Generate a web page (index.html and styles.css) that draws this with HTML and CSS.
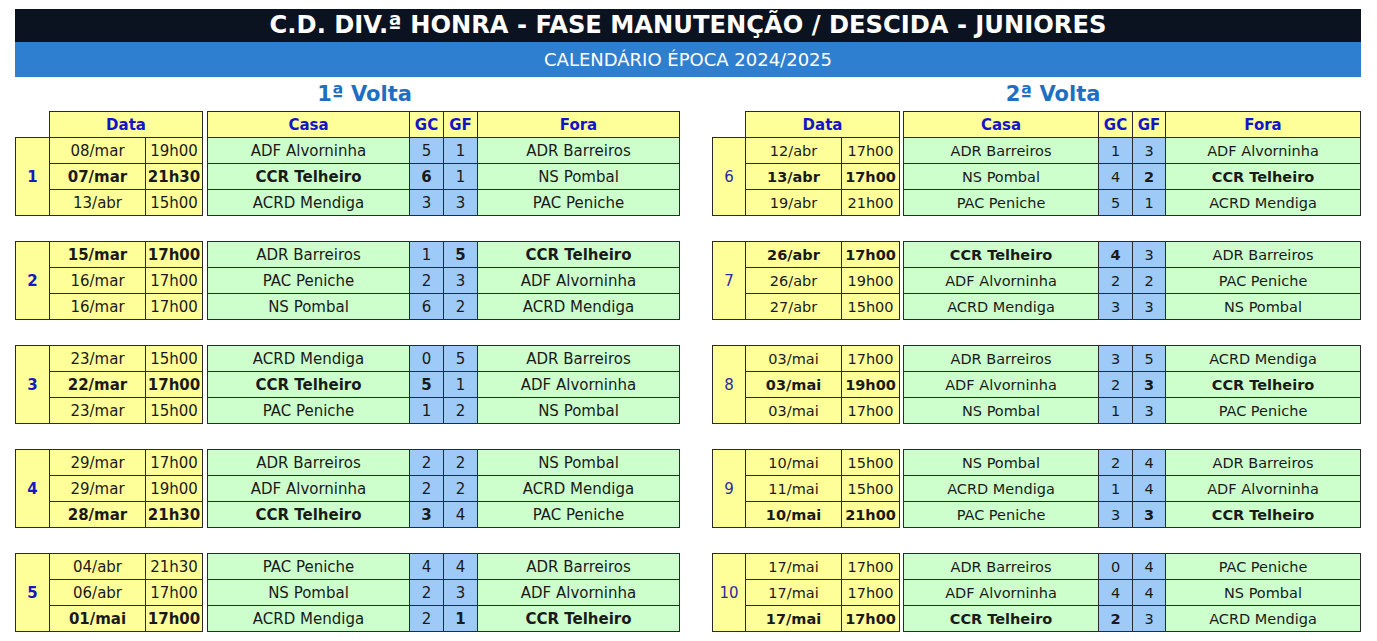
FILE: index.html
```html
<!DOCTYPE html>
<html lang="pt">
<head>
<meta charset="utf-8">
<title>Calendário Juniores</title>
<link rel="stylesheet" href="styles.css">
</head>
<body>
<div class="page">
  <div class="title">C.D. DIV.ª HONRA - FASE MANUTENÇÃO / DESCIDA - JUNIORES</div>
  <div class="subtitle">CALENDÁRIO ÉPOCA 2024/2025</div>

  <div class="sides">
    <!-- 1ª Volta -->
    <section class="side side-left">
      <h2 class="volta">1ª Volta</h2>
      <div class="head">
        <div class="head-date"><div class="hc">Data</div></div>
        <div class="head-game"><div class="hc">Casa</div><div class="hc">GC</div><div class="hc">GF</div><div class="hc">Fora</div></div>
      </div>

      <div class="block">
        <div class="dates"><div class="round">1</div>
          <div class="c">08/mar</div><div class="c">19h00</div>
          <div class="c b">07/mar</div><div class="c b">21h30</div>
          <div class="c">13/abr</div><div class="c">15h00</div>
        </div>
        <div class="games">
          <div class="c">ADF Alvorninha</div><div class="g">5</div><div class="g">1</div><div class="c">ADR Barreiros</div>
          <div class="c b">CCR Telheiro</div><div class="g b">6</div><div class="g">1</div><div class="c">NS Pombal</div>
          <div class="c">ACRD Mendiga</div><div class="g">3</div><div class="g">3</div><div class="c">PAC Peniche</div>
        </div>
      </div>

      <div class="block">
        <div class="dates"><div class="round">2</div>
          <div class="c b">15/mar</div><div class="c b">17h00</div>
          <div class="c">16/mar</div><div class="c">17h00</div>
          <div class="c">16/mar</div><div class="c">17h00</div>
        </div>
        <div class="games">
          <div class="c">ADR Barreiros</div><div class="g">1</div><div class="g b">5</div><div class="c b">CCR Telheiro</div>
          <div class="c">PAC Peniche</div><div class="g">2</div><div class="g">3</div><div class="c">ADF Alvorninha</div>
          <div class="c">NS Pombal</div><div class="g">6</div><div class="g">2</div><div class="c">ACRD Mendiga</div>
        </div>
      </div>

      <div class="block">
        <div class="dates"><div class="round">3</div>
          <div class="c">23/mar</div><div class="c">15h00</div>
          <div class="c b">22/mar</div><div class="c b">17h00</div>
          <div class="c">23/mar</div><div class="c">15h00</div>
        </div>
        <div class="games">
          <div class="c">ACRD Mendiga</div><div class="g">0</div><div class="g">5</div><div class="c">ADR Barreiros</div>
          <div class="c b">CCR Telheiro</div><div class="g b">5</div><div class="g">1</div><div class="c">ADF Alvorninha</div>
          <div class="c">PAC Peniche</div><div class="g">1</div><div class="g">2</div><div class="c">NS Pombal</div>
        </div>
      </div>

      <div class="block">
        <div class="dates"><div class="round">4</div>
          <div class="c">29/mar</div><div class="c">17h00</div>
          <div class="c">29/mar</div><div class="c">19h00</div>
          <div class="c b">28/mar</div><div class="c b">21h30</div>
        </div>
        <div class="games">
          <div class="c">ADR Barreiros</div><div class="g">2</div><div class="g">2</div><div class="c">NS Pombal</div>
          <div class="c">ADF Alvorninha</div><div class="g">2</div><div class="g">2</div><div class="c">ACRD Mendiga</div>
          <div class="c b">CCR Telheiro</div><div class="g b">3</div><div class="g">4</div><div class="c">PAC Peniche</div>
        </div>
      </div>

      <div class="block">
        <div class="dates"><div class="round">5</div>
          <div class="c">04/abr</div><div class="c">21h30</div>
          <div class="c">06/abr</div><div class="c">17h00</div>
          <div class="c b">01/mai</div><div class="c b">17h00</div>
        </div>
        <div class="games">
          <div class="c">PAC Peniche</div><div class="g">4</div><div class="g">4</div><div class="c">ADR Barreiros</div>
          <div class="c">NS Pombal</div><div class="g">2</div><div class="g">3</div><div class="c">ADF Alvorninha</div>
          <div class="c">ACRD Mendiga</div><div class="g">2</div><div class="g b">1</div><div class="c b">CCR Telheiro</div>
        </div>
      </div>
    </section>

    <!-- 2ª Volta -->
    <section class="side side-right">
      <h2 class="volta">2ª Volta</h2>
      <div class="head">
        <div class="head-date"><div class="hc">Data</div></div>
        <div class="head-game"><div class="hc">Casa</div><div class="hc">GC</div><div class="hc">GF</div><div class="hc">Fora</div></div>
      </div>

      <div class="block">
        <div class="dates"><div class="round">6</div>
          <div class="c">12/abr</div><div class="c">17h00</div>
          <div class="c b">13/abr</div><div class="c b">17h00</div>
          <div class="c">19/abr</div><div class="c">21h00</div>
        </div>
        <div class="games">
          <div class="c">ADR Barreiros</div><div class="g">1</div><div class="g">3</div><div class="c">ADF Alvorninha</div>
          <div class="c">NS Pombal</div><div class="g">4</div><div class="g b">2</div><div class="c b">CCR Telheiro</div>
          <div class="c">PAC Peniche</div><div class="g">5</div><div class="g">1</div><div class="c">ACRD Mendiga</div>
        </div>
      </div>

      <div class="block">
        <div class="dates"><div class="round">7</div>
          <div class="c b">26/abr</div><div class="c b">17h00</div>
          <div class="c">26/abr</div><div class="c">19h00</div>
          <div class="c">27/abr</div><div class="c">15h00</div>
        </div>
        <div class="games">
          <div class="c b">CCR Telheiro</div><div class="g b">4</div><div class="g">3</div><div class="c">ADR Barreiros</div>
          <div class="c">ADF Alvorninha</div><div class="g">2</div><div class="g">2</div><div class="c">PAC Peniche</div>
          <div class="c">ACRD Mendiga</div><div class="g">3</div><div class="g">3</div><div class="c">NS Pombal</div>
        </div>
      </div>

      <div class="block">
        <div class="dates"><div class="round">8</div>
          <div class="c">03/mai</div><div class="c">17h00</div>
          <div class="c b">03/mai</div><div class="c b">19h00</div>
          <div class="c">03/mai</div><div class="c">17h00</div>
        </div>
        <div class="games">
          <div class="c">ADR Barreiros</div><div class="g">3</div><div class="g">5</div><div class="c">ACRD Mendiga</div>
          <div class="c">ADF Alvorninha</div><div class="g">2</div><div class="g b">3</div><div class="c b">CCR Telheiro</div>
          <div class="c">NS Pombal</div><div class="g">1</div><div class="g">3</div><div class="c">PAC Peniche</div>
        </div>
      </div>

      <div class="block">
        <div class="dates"><div class="round">9</div>
          <div class="c">10/mai</div><div class="c">15h00</div>
          <div class="c">11/mai</div><div class="c">15h00</div>
          <div class="c b">10/mai</div><div class="c b">21h00</div>
        </div>
        <div class="games">
          <div class="c">NS Pombal</div><div class="g">2</div><div class="g">4</div><div class="c">ADR Barreiros</div>
          <div class="c">ACRD Mendiga</div><div class="g">1</div><div class="g">4</div><div class="c">ADF Alvorninha</div>
          <div class="c">PAC Peniche</div><div class="g">3</div><div class="g b">3</div><div class="c b">CCR Telheiro</div>
        </div>
      </div>

      <div class="block">
        <div class="dates"><div class="round">10</div>
          <div class="c">17/mai</div><div class="c">17h00</div>
          <div class="c">17/mai</div><div class="c">17h00</div>
          <div class="c b">17/mai</div><div class="c b">17h00</div>
        </div>
        <div class="games">
          <div class="c">ADR Barreiros</div><div class="g">0</div><div class="g">4</div><div class="c">PAC Peniche</div>
          <div class="c">ADF Alvorninha</div><div class="g">4</div><div class="g">4</div><div class="c">NS Pombal</div>
          <div class="c b">CCR Telheiro</div><div class="g b">2</div><div class="g">3</div><div class="c">ACRD Mendiga</div>
        </div>
      </div>
    </section>
  </div>
</div>
</body>
</html>
```

FILE: styles.css
```css
* { box-sizing: border-box; }

html, body {
  margin: 0;
  padding: 0;
  background: #ffffff;
}

body {
  font-family: "DejaVu Sans", Verdana, sans-serif;
  color: #1a1a1a;
}

.page {
  padding: 9px 0 0 15px;
  width: 1377px;
}

.title {
  width: 1346px;
  height: 33px;
  background: #0b1220;
  color: #ffffff;
  font-weight: bold;
  font-size: 24.2px;
  line-height: 33px;
  text-align: center;
  white-space: nowrap;
}

.subtitle {
  width: 1346px;
  height: 35px;
  background: #2f7fd1;
  color: #ffffff;
  font-size: 18px;
  line-height: 35px;
  text-align: center;
}

.sides {
  display: flex;
  gap: 32px;
}

.volta {
  margin: 0;
  height: 34px;
  line-height: 34px;
  padding-left: 34px;
  text-align: center;
  font-size: 21px;
  font-weight: bold;
  color: #1f6fc1;
}

.side-right .volta { padding-left: 33px; }

/* header row */
.head {
  display: flex;
  gap: 4px;
}
.side-right .head { gap: 3px; }

.head-date {
  margin-left: 34px;
  width: 154px;
  border: 1px solid #2a2a2a;
  border-bottom: none;
  display: flex;
}
.side-right .head-date { margin-left: 33px; width: 155px; }

.head-game {
  display: grid;
  grid-template-columns: 202px 34px 34px 202px;
  border-top: 1px solid #2a2a2a;
  border-left: 1px solid #2a2a2a;
}
.side-right .head-game { grid-template-columns: 195px 34px 33px 195px; }

.hc {
  height: 25px;
  background: #ffff99;
  color: #1414c8;
  font-weight: bold;
  font-size: 15px;
  display: flex;
  align-items: center;
  justify-content: center;
  border-right: 1px solid #2a2a2a;
}
.head-date .hc { flex: 1; border-right: none; }

/* blocks */
.block {
  display: flex;
  gap: 4px;
  margin-bottom: 25px;
}
.side-right .block { gap: 3px; }

.dates {
  display: grid;
  grid-template-columns: 34px 96px 57px;
  grid-auto-rows: 26px;
  border-top: 1px solid #2a2a2a;
  border-left: 1px solid #2a2a2a;
  background: #ffff99;
}
.side-right .dates { grid-template-columns: 33px 96px 58px; }

.games {
  display: grid;
  grid-template-columns: 202px 34px 34px 202px;
  grid-auto-rows: 26px;
  border-top: 1px solid #2a2a2a;
  border-left: 1px solid #2a2a2a;
  background: #ccffcc;
}
.side-right .games { grid-template-columns: 195px 34px 33px 195px; }

.round {
  grid-row: span 3;
  border-right: 1px solid #2a2a2a;
  border-bottom: 1px solid #2a2a2a;
  display: flex;
  align-items: center;
  justify-content: center;
  color: #1818c0;
  font-weight: bold;
  font-size: 15px;
}
.side-right .round {
  font-weight: normal;
  color: #2b2ba0;
}

.c, .g {
  border-right: 1px solid #2a2a2a;
  border-bottom: 1px solid #2a2a2a;
  display: flex;
  align-items: center;
  justify-content: center;
  font-size: 15px;
  white-space: nowrap;
}
.side-right .c, .side-right .g { font-size: 14.5px; }

.g { background: #9dcaf7; }

.b { font-weight: bold; }
```
